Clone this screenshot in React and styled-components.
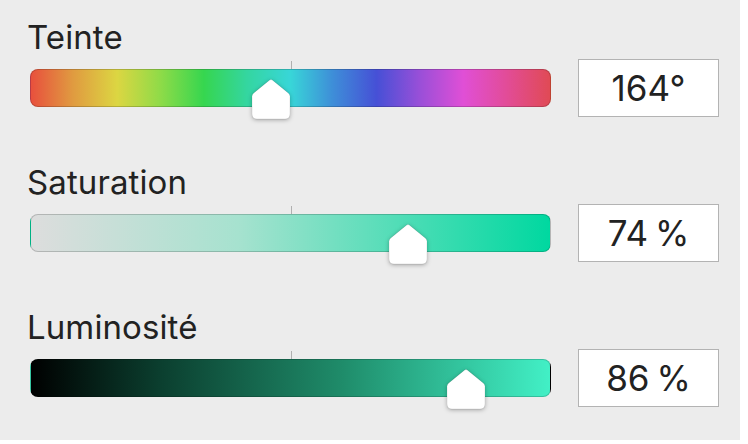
import React from 'react';
import styled, { createGlobalStyle } from 'styled-components';

const GlobalStyle = createGlobalStyle`
  html, body {
    margin: 0;
    padding: 0;
    background: #ffffff;
  }
  body {
    font-family: Inter, "Liberation Sans", sans-serif;
  }
`;

const Panel = styled.div`
  width: 740px;
  height: 440px;
  box-sizing: border-box;
  padding: 17px 0 0 30px;
  background: #ececec;
  display: flex;
  flex-direction: column;
  gap: 45px;
`;

const Section = styled.div`
  display: flex;
  flex-direction: column;
  gap: 2px;
`;

const Label = styled.div`
  margin-left: -3px;
  font-size: 33px;
  line-height: 40px;
  color: #222222;
  letter-spacing: 0.1px;
`;

const Controls = styled.div`
  display: flex;
  align-items: center;
  gap: 27px;
  height: 58px;
`;

const Track = styled.div`
  position: relative;
  width: 521px;
  height: 38px;
  box-sizing: border-box;
  border-radius: 8px;
  border: 1px solid rgba(0, 0, 0, 0.18);
  background: ${({ $gradient }) => $gradient};

  &::before {
    content: '';
    position: absolute;
    left: 50%;
    top: -9px;
    width: 1px;
    height: 8px;
    background: #b0b0b0;
  }
`;

const ThumbWrap = styled.div`
  position: absolute;
  top: 9px;
  width: 38px;
  height: 41px;
  filter: drop-shadow(0 1px 2px rgba(0, 0, 0, 0.3));
`;

const ValueBox = styled.div`
  width: 141px;
  height: 58px;
  box-sizing: border-box;
  border: 1.5px solid #b3b3b3;
  background: #ffffff;
  display: flex;
  align-items: center;
  justify-content: center;
  font-size: 35px;
  word-spacing: -3px;
  color: #222222;
`;

const Thumb = ({ pos }) => (
  <ThumbWrap style={{ left: `calc(1px + ${pos} * 483px)` }}>
    <svg width="38" height="41" viewBox="0 0 38 41">
      <path
        d="M17.4 1.2 Q19 0 20.6 1.2 L36.5 14.2 Q38 15.4 38 17.4 L38 35 Q38 40 33 40 L5 40 Q0 40 0 35 L0 17.4 Q0 15.4 1.5 14.2 Z"
        fill="#ffffff"
        stroke="rgba(0,0,0,0.12)"
        strokeWidth="0.8"
      />
    </svg>
  </ThumbWrap>
);

const sliders = [
  {
    label: 'Teinte',
    value: '164°',
    pos: 164 / 360,
    gradient:
      'linear-gradient(to right, #e8503d 0%, #e09a40 8%, #dcd642 16.6%, #8edb48 25%, #36d64f 33.3%, #34d6a0 41.6%, #38d6d8 50%, #3e8fd8 58%, #4650d6 66.6%, #9a4fd8 75%, #e04fd6 83.3%, #e24c98 91.6%, #e04a55 100%)',
  },
  {
    label: 'Saturation',
    value: '74 %',
    pos: 0.74,
    gradient: 'linear-gradient(to right, #dddddd 0%, #a6e2cf 40%, #00d8a0 100%)',
  },
  {
    label: 'Luminosité',
    value: '86 %',
    pos: 0.86,
    gradient: 'linear-gradient(to right, #000000 0%, #0b3f2f 25%, #1f8c6a 60%, #42f0c6 100%)',
  },
];

const App = () => (
  <>
    <GlobalStyle />
    <Panel>
      {sliders.map(({ label, value, pos, gradient }) => (
        <Section key={label}>
          <Label>{label}</Label>
          <Controls>
            <Track $gradient={gradient}>
              <Thumb pos={pos} />
            </Track>
            <ValueBox>{value}</ValueBox>
          </Controls>
        </Section>
      ))}
    </Panel>
  </>
);

export default App;
